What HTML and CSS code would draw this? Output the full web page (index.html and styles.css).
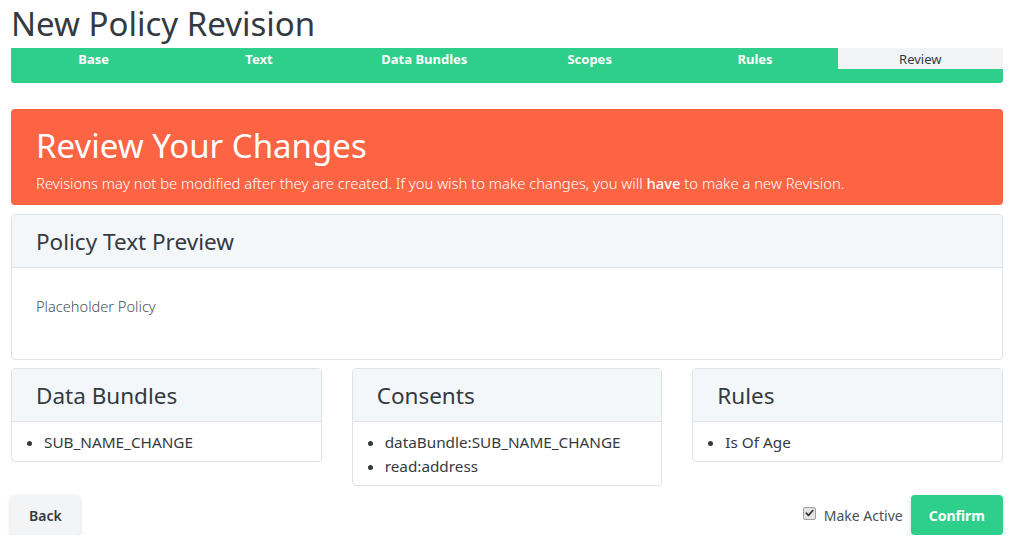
FILE: index.html
```html
<!DOCTYPE html>
<html lang="en">
<head>
<meta charset="utf-8">
<title>New Policy Revision</title>
<link rel="stylesheet" href="styles.css">
</head>
<body>
<div class="page">
  <h1 class="page-title">New Policy Revision</h1>
  <div class="steps">
    <div class="step">Base</div>
    <div class="step">Text</div>
    <div class="step">Data Bundles</div>
    <div class="step">Scopes</div>
    <div class="step">Rules</div>
    <div class="step step-active">Review</div>
  </div>

  <div class="alert">
    <h2 class="alert-title">Review Your Changes</h2>
    <p class="alert-text">Revisions may not be modified after they are created. If you wish to make changes, you will <strong>have</strong> to make a new Revision.</p>
  </div>

  <div class="card">
    <div class="card-header"><h3>Policy Text Preview</h3></div>
    <div class="card-body preview">Placeholder Policy</div>
  </div>

  <div class="cards-row">
    <div class="card">
      <div class="card-header"><h3>Data Bundles</h3></div>
      <ul class="card-list">
        <li>SUB_NAME_CHANGE</li>
      </ul>
    </div>
    <div class="card">
      <div class="card-header"><h3>Consents</h3></div>
      <ul class="card-list">
        <li>dataBundle:SUB_NAME_CHANGE</li>
        <li>read:address</li>
      </ul>
    </div>
    <div class="card">
      <div class="card-header"><h3>Rules</h3></div>
      <ul class="card-list">
        <li>Is Of Age</li>
      </ul>
    </div>
  </div>

  <div class="actions">
    <button class="btn btn-light">Back</button>
    <div class="actions-right">
      <label class="check">
        <span class="checkbox" role="checkbox" aria-checked="true">
          <svg viewBox="0 0 12 12" width="12" height="12"><path d="M2.5 6.2 L4.9 8.6 L9.6 3.2" fill="none" stroke="#333" stroke-width="1.8" stroke-linecap="round" stroke-linejoin="round"/></svg>
        </span>
        Make Active
      </label>
      <button class="btn btn-success">Confirm</button>
    </div>
  </div>
</div>
</body>
</html>
```

FILE: styles.css
```css
* { box-sizing: border-box; }
body {
  margin: 0;
  font-family: "Noto Sans", "Open Sans", sans-serif;
  color: #343a40;
  background: #fff;
}
.page {
  width: 992px;
  margin-left: 11px;
}
.page-title {
  margin: 0;
  font-size: 33px;
  font-weight: 400;
  line-height: 48px;
  color: #343a40;
}
.steps {
  display: grid;
  grid-template-columns: repeat(6, 1fr);
  background: #2ecf8a;
  height: 35px;
  border-radius: 0 0 3px 3px;
  margin-bottom: 26px;
}
.step {
  height: 21px;
  line-height: 22px;
  text-align: center;
  font-size: 13px;
  font-weight: 700;
  color: #fff;
}
.step-active {
  background: #f2f3f5;
  color: #343a40;
  font-weight: 400;
}
.alert {
  background: #fc6443;
  border-radius: 4px;
  padding: 17px 25px 12px;
  color: #fff;
  margin-bottom: 9px;
}
.alert-title {
  margin: 0 0 7px;
  font-size: 33px;
  font-weight: 400;
  line-height: 40px;
}
.alert-text {
  margin: 0;
  font-size: 14.8px;
  font-weight: 300;
  line-height: 20px;
}
.alert-text strong { font-weight: 500; }
.card {
  border: 1px solid #dfe2e6;
  border-radius: 4px;
  background: #fff;
  margin-bottom: 9px;
  overflow: hidden;
}
.card-header {
  background: #f4f7fa;
  border-bottom: 1px solid #dfe2e6;
  height: 53px;
  padding: 0 24px;
  display: flex;
  align-items: center;
}
.card-header h3 {
  margin: 0;
  font-size: 22.5px;
  font-weight: 400;
  color: #343a40;
}
.preview {
  height: 91px;
  padding: 28px 24px;
  font-size: 14.6px;
  font-weight: 300;
  color: #495057;
}
.cards-row {
  display: grid;
  grid-template-columns: repeat(3, 1fr);
  column-gap: 30px;
  align-items: start;
  margin-top: -1px;
}
.card-list {
  margin: 0;
  padding: 8px 0 7px 32px;
  font-size: 15.3px;
  line-height: 24px;
  color: #343a40;
}
.card-list li::marker { color: #343a40; }
.actions {
  display: flex;
  justify-content: space-between;
  align-items: center;
}
.actions-right {
  display: flex;
  align-items: center;
  gap: 8px;
}
.btn {
  font-family: inherit;
  border: none;
  border-radius: 4px;
  height: 40px;
  font-size: 14px;
  font-weight: 700;
  padding: 0 18px;
  box-shadow: 0 2px 5px rgba(0,0,0,0.15);
}
.btn-light {
  background: #f3f4f6;
  color: #343a40;
  font-weight: 600;
}
.btn-success {
  background: #2ecf8a;
  color: #fff;
  padding: 0 18px;
}
.check {
  display: flex;
  align-items: center;
  gap: 8px;
  font-size: 14px;
  color: #495057;
}
.checkbox {
  width: 13px;
  height: 13px;
  border: 1px solid #a0a0a0;
  border-radius: 2px;
  background: #e4e4e4;
  display: flex;
  align-items: center;
  justify-content: center;
  margin-top: -4px;
}
.checkbox svg { display: block; }
```
